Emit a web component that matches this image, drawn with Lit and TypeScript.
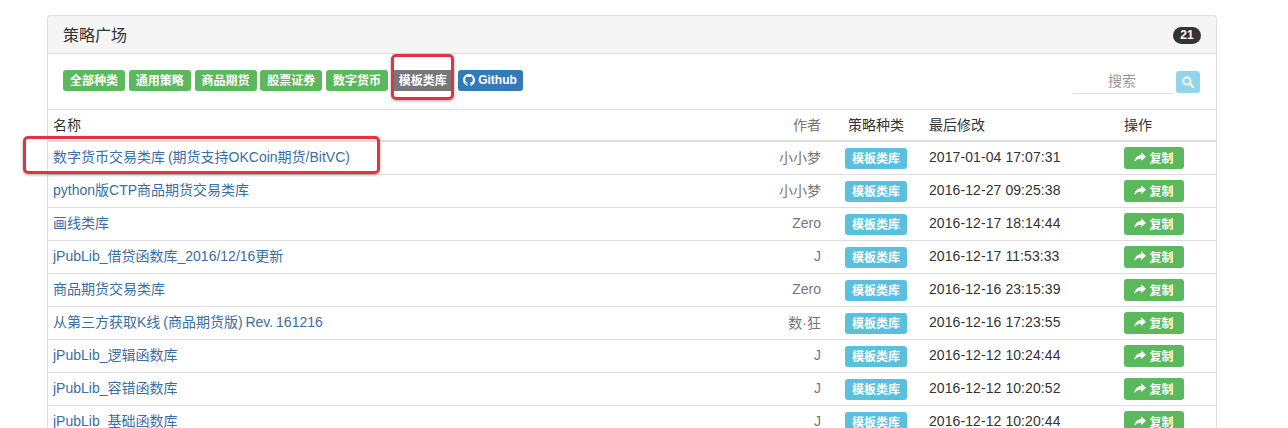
import { LitElement, html, css, svg } from "lit";
import { customElement } from "lit/decorators.js";

const rows = [
  ["数字货币交易类库 (期货支持OKCoin期货/BitVC)", "小小梦", "2017-01-04 17:07:31"],
  ["python版CTP商品期货交易类库", "小小梦", "2016-12-27 09:25:38"],
  ["画线类库", "Zero", "2016-12-17 18:14:44"],
  ["jPubLib_借贷函数库_2016/12/16更新", "J", "2016-12-17 11:53:33"],
  ["商品期货交易类库", "Zero", "2016-12-16 23:15:39"],
  ["从第三方获取K线 (商品期货版) Rev. 161216", "数·狂", "2016-12-16 17:23:55"],
  ["jPubLib_逻辑函数库", "J", "2016-12-12 10:24:44"],
  ["jPubLib_容错函数库", "J", "2016-12-12 10:20:52"],
  ["jPubLib_基础函数库", "J", "2016-12-12 10:20:44"],
];

const filters = ["全部种类", "通用策略", "商品期货", "股票证券", "数字货币"];

const shareIcon = svg`<svg class="share" viewBox="0 0 12 12" aria-hidden="true"><path fill="currentColor" d="M7 1.300 L12 5.800 L7 10.300 V7.800 C4.300 7.800 2.200 8.700 0.300 10.800 C0.900 7.200 3.400 4.400 7 4.100 Z"/></svg>`;

const githubIcon = svg`<svg class="gh" viewBox="0 0 16 16" aria-hidden="true"><path fill="currentColor" d="M8 0C3.58 0 0 3.58 0 8c0 3.54 2.29 6.53 5.47 7.59.4.07.55-.17.55-.38 0-.19-.01-.82-.01-1.49-2.01.37-2.53-.49-2.69-.94-.09-.23-.48-.94-.82-1.13-.28-.15-.68-.52-.01-.53.63-.01 1.08.58 1.23.82.72 1.21 1.87.87 2.33.66.07-.52.28-.87.51-1.07-1.78-.2-3.64-.89-3.64-3.95 0-.87.31-1.59.82-2.15-.08-.2-.36-1.02.08-2.12 0 0 .67-.21 2.2.82.64-.18 1.32-.27 2-.27s1.36.09 2 .27c1.53-1.04 2.2-.82 2.2-.82.44 1.1.16 1.92.08 2.12.51.56.82 1.27.82 2.15 0 3.07-1.87 3.75-3.65 3.95.29.25.54.73.54 1.48 0 1.07-.01 1.93-.01 2.2 0 .21.15.46.55.38A8.01 8.01 0 0 0 16 8c0-4.42-3.58-8-8-8z"/></svg>`;

const searchIcon = svg`<svg class="mag" viewBox="0 0 12 12" aria-hidden="true"><circle cx="5" cy="5" r="3.6" fill="none" stroke="currentColor" stroke-width="1.700"/><path d="M7.700 7.700 L11 11" stroke="currentColor" stroke-width="2" stroke-linecap="round"/></svg>`;

@customElement("app-root")
export class AppRoot extends LitElement {
  static styles = css`
    :host {
      display: block;
      position: relative;
      height: 428px;
      overflow: hidden;
      background: #fff;
      font-family: "Liberation Sans", "Noto Sans CJK SC", sans-serif;
      font-size: 14px;
      color: #333;
    }
    .panel {
      width: 1170px;
      box-sizing: border-box;
      margin: 15px 0 0 47px;
      border: 1px solid #ddd;
      border-radius: 4px;
      background: #fff;
    }
    .heading {
      height: 38px;
      box-sizing: border-box;
      display: flex;
      align-items: center;
      justify-content: space-between;
      padding: 0 15px;
      background: #f5f5f5;
      border-bottom: 1px solid #ddd;
      border-radius: 3px 3px 0 0;
      font-size: 16px;
    }
    .title {
      padding-bottom: 2px;
    }
    .count {
      width: 28px;
      height: 17px;
      margin-top: 2px;
      border-radius: 9px;
      background: #333;
      color: #fff;
      font-size: 12px;
      font-weight: 700;
      line-height: 17px;
      text-align: center;
    }
    .toolbar {
      height: 55px;
      box-sizing: border-box;
      display: flex;
      justify-content: space-between;
      padding: 16px 16px 0 15px;
    }
    .filters {
      display: flex;
      gap: 3.75px;
      align-items: flex-start;
    }
    .btn {
      height: 21px;
      box-sizing: border-box;
      display: flex;
      align-items: center;
      justify-content: center;
      gap: 3px;
      padding-bottom: 2px;
      border-radius: 3px;
      color: #fff;
      font-size: 12px;
      font-weight: 700;
      white-space: nowrap;
    }
    .filter {
      width: 62px;
      background: #5cb85c;
    }
    .current {
      background: #777;
    }
    .github {
      width: 65px;
      background: #337ab7;
    }
    .gh {
      width: 12px;
      height: 12px;
    }
    .search {
      display: flex;
      align-items: flex-start;
      gap: 3px;
      margin-top: 1px;
    }
    .field {
      width: 100px;
      height: 23px;
      box-sizing: border-box;
      border-bottom: 1px solid #ddd;
      color: #999;
      font-size: 14px;
      line-height: 20px;
      padding-left: 35px;
    }
    .go {
      width: 24px;
      height: 22px;
      display: flex;
      align-items: center;
      justify-content: center;
      border-radius: 3px;
      background: #92d5e9;
      color: #fff;
    }
    .mag {
      width: 12px;
      height: 12px;
    }
    table {
      width: 100%;
      table-layout: fixed;
      border-collapse: separate;
      border-spacing: 0;
    }
    .c-author { width: 100px; }
    .c-type { width: 98px; }
    .c-date { width: 195px; }
    .c-ops { width: 97px; }
    th, td {
      box-sizing: border-box;
      padding: 0 5px;
      text-align: left;
      white-space: nowrap;
      overflow: hidden;
    }
    th {
      height: 33px;
      border-top: 1px solid #ddd;
      border-bottom: 2px solid #ddd;
      font-weight: 400;
      color: #333;
      padding-bottom: 3px;
    }
    td {
      height: 33px;
      border-bottom: 1px solid #ddd;
    }
    td.title-cell {
      padding-bottom: 4px;
    }
    td.text-cell {
      padding-bottom: 2px;
    }
    td.date {
      letter-spacing: 0.08px;
    }
    th.author, td.author {
      text-align: right;
      color: #777;
    }
    th.type, td.type {
      text-align: center;
      padding-left: 6px;
      padding-right: 4px;
    }
    .name {
      color: #3a6ea5;
      text-decoration: none;
      word-spacing: -1px;
    }
    .tag {
      display: flex;
      box-sizing: border-box;
      width: 62px;
      height: 21px;
      margin: 0 auto;
      padding-bottom: 2px;
      align-items: center;
      justify-content: center;
      border-radius: 3px;
      background: #5bc0de;
      color: #fff;
      font-size: 12px;
      font-weight: 700;
    }
    .copy {
      width: 60px;
      height: 22px;
      background: #5cb85c;
    }
    .share {
      width: 12px;
      height: 12px;
    }
    .mark {
      position: absolute;
      box-sizing: border-box;
      border: 3px solid #e2333f;
      border-radius: 5px;
      box-shadow: 0 1px 3px rgba(0, 0, 0, 0.35);
      pointer-events: none;
    }
    .mark-filter {
      left: 391px;
      top: 54px;
      width: 63px;
      height: 46px;
    }
    .mark-row {
      left: 22.5px;
      top: 136px;
      width: 357px;
      height: 37.5px;
    }
  `;

  render() {
    return html`
      <section class="panel">
        <div class="heading"><span class="title">策略广场</span><span class="count">21</span></div>
        <div class="toolbar">
          <div class="filters">
            ${filters.map((f) => html`<a class="btn filter">${f}</a>`)}
            <a class="btn filter current">模板类库</a>
            <a class="btn github">${githubIcon}Github</a>
          </div>
          <div class="search">
            <div class="field">搜索</div>
            <div class="go">${searchIcon}</div>
          </div>
        </div>
        <table>
          <colgroup>
            <col />
            <col class="c-author" />
            <col class="c-type" />
            <col class="c-date" />
            <col class="c-ops" />
          </colgroup>
          <thead>
            <tr>
              <th>名称</th>
              <th class="author">作者</th>
              <th class="type">策略种类</th>
              <th>最后修改</th>
              <th>操作</th>
            </tr>
          </thead>
          <tbody>
            ${rows.map(
              ([name, author, date]) => html`
                <tr>
                  <td class="title-cell"><a class="name">${name}</a></td>
                  <td class="author text-cell">${author}</td>
                  <td class="type"><span class="tag">模板类库</span></td>
                  <td class="date text-cell">${date}</td>
                  <td><a class="btn copy">${shareIcon}复制</a></td>
                </tr>
              `
            )}
          </tbody>
        </table>
      </section>
      <div class="mark mark-filter"></div>
      <div class="mark mark-row"></div>
    `;
  }
}
